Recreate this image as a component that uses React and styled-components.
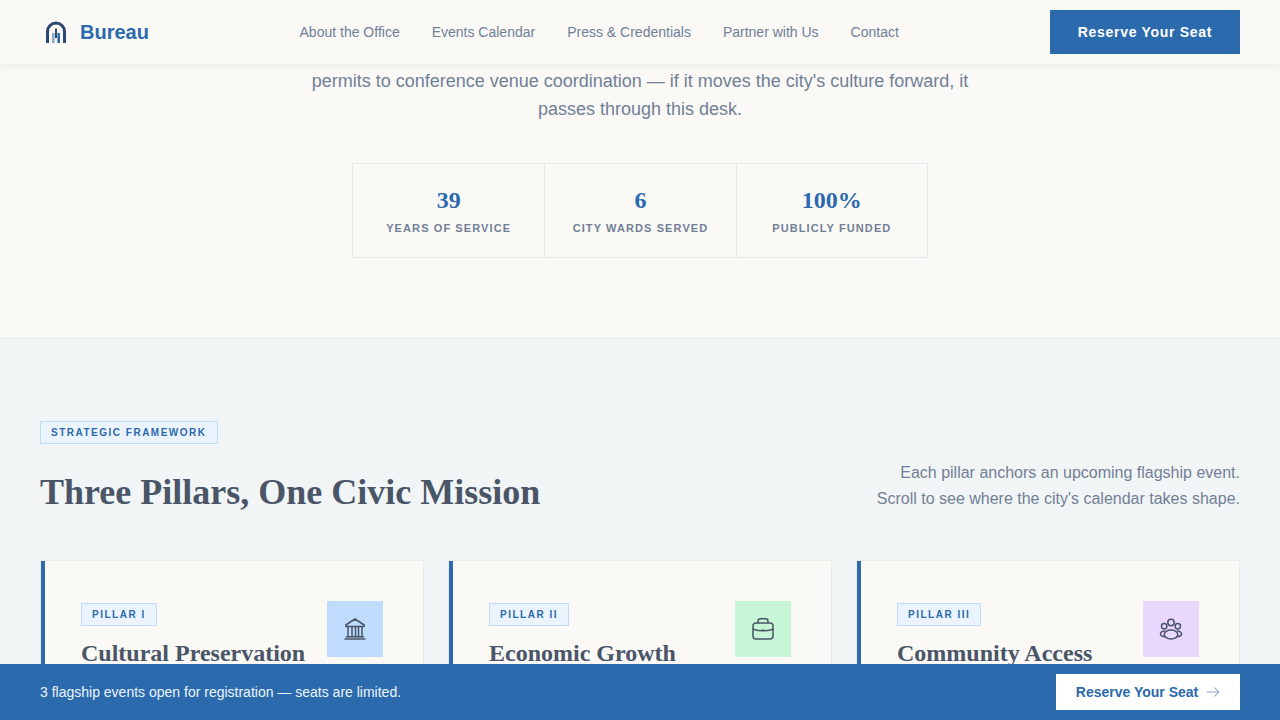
import React from "react";
import styled, { createGlobalStyle } from "styled-components";

const GlobalStyle = createGlobalStyle`
	html, body {
		margin: 0;
		padding: 0;
		height: 100%;
		overflow: hidden;
		font-family: "Liberation Sans", Arial, sans-serif;
		background: #faf9f6;
	}
	* {
		box-sizing: border-box;
	}
`;

const navLinks = [
	"About the Office",
	"Events Calendar",
	"Press & Credentials",
	"Partner with Us",
	"Contact",
];

const stats = [
	{ value: "39", label: "Years of Service" },
	{ value: "6", label: "City Wards Served" },
	{ value: "100%", label: "Publicly Funded" },
];

function BankIcon() {
	return (
		<svg width="24" height="24" viewBox="0 0 24 24" fill="none" stroke="currentColor" strokeWidth="1.5" strokeLinecap="round" strokeLinejoin="round">
			<path d="M12 2 2.800 8v1.600h18.400V8z" />
			<path d="M5 9.600v10.200M9 9.600v10.200M12.500 9.600v10.200M15.500 9.600v10.200M19 9.600v10.200" />
			<path d="M3.500 19.800h17M2 22h20" />
		</svg>
	);
}

function CaseIcon() {
	return (
		<svg width="24" height="24" viewBox="0 0 24 24" fill="none" stroke="currentColor" strokeWidth="1.5" strokeLinecap="round" strokeLinejoin="round">
			<path d="M7 6V4.200a2.400 2.400 0 0 1 2.400-2.400h5.200a2.400 2.400 0 0 1 2.400 2.400V6" />
			<rect x="2" y="6" width="20" height="16" rx="3" />
			<path d="M2 12.200c6.200 2 13.800 2 20 0" />
			<path d="M12 12.800v.6" />
		</svg>
	);
}

function PeopleIcon() {
	return (
		<svg width="24" height="24" viewBox="0 0 24 24" fill="none" stroke="currentColor" strokeWidth="1.5" strokeLinecap="round" strokeLinejoin="round">
			<circle cx="12" cy="5.500" r="3.200" />
			<circle cx="5.200" cy="9.200" r="2.700" />
			<circle cx="18.800" cy="9.200" r="2.700" />
			<ellipse cx="12" cy="17.500" rx="6.800" ry="4.500" />
			<path d="M5.500 14C3 14.400 1.500 15.600 1.500 17s1.200 2.400 3.800 2.700M18.500 14c2.500.4 4 1.600 4 3s-1.200 2.400-3.800 2.700" />
		</svg>
	);
}

const pillars = [
	{ tag: "Pillar I", title: "Cultural Preservation", tint: "#bfdbfe", icon: <BankIcon /> },
	{ tag: "Pillar II", title: "Economic Growth", tint: "#c6f6d5", icon: <CaseIcon /> },
	{ tag: "Pillar III", title: "Community Access", tint: "#e9d8fd", icon: <PeopleIcon /> },
];

function App() {
	return (
		<Page>
			<GlobalStyle />
			<Nav>
				<Brand>
					<svg width="24" height="24" viewBox="0 0 24 24" fill="none">
						<path d="M3.500 23V11.500a8.500 8.500 0 0 1 17 0V23" stroke="#2c4a6e" strokeWidth="3" />
						<path d="M9.300 23V13" stroke="#8fabc6" strokeWidth="2.600" />
						<path d="M14.700 23V13" stroke="#2b6aac" strokeWidth="2.600" />
						<path d="M12 18V8.500" stroke="#2c4a6e" strokeWidth="2" />
					</svg>
					<BrandName>Bureau</BrandName>
				</Brand>
				<NavLinks>
					{navLinks.map((link) => (
						<NavLink key={link} href="#">{link}</NavLink>
					))}
				</NavLinks>
				<NavButton>Reserve Your Seat</NavButton>
			</Nav>

			<Content>
				<Hero>
					<HeroText>
						permits to conference venue coordination — if it moves the city's culture forward, it passes through this desk.
					</HeroText>
					<StatGrid>
						{stats.map((stat) => (
							<Stat key={stat.label}>
								<StatValue>{stat.value}</StatValue>
								<StatLabel>{stat.label}</StatLabel>
							</Stat>
						))}
					</StatGrid>
				</Hero>

				<Framework>
					<Tag>Strategic Framework</Tag>
					<HeadRow>
						<Heading>Three Pillars, One Civic Mission</Heading>
						<HeadNote>
							Each pillar anchors an upcoming flagship event.
							<br />
							Scroll to see where the city's calendar takes shape.
						</HeadNote>
					</HeadRow>
					<Cards>
						{pillars.map((pillar) => (
							<Card key={pillar.tag}>
								<CardTop>
									<div>
										<PillarTag>{pillar.tag}</PillarTag>
										<CardTitle>{pillar.title}</CardTitle>
									</div>
									<IconBox $tint={pillar.tint}>{pillar.icon}</IconBox>
								</CardTop>
							</Card>
						))}
					</Cards>
				</Framework>
			</Content>

			<Bar>
				<BarText>3 flagship events open for registration — seats are limited.</BarText>
				<BarButton>
					Reserve Your Seat
					<svg width="14" height="14" viewBox="0 0 24 24" fill="none" stroke="#8aa9cc" strokeWidth="1.8" strokeLinecap="round" strokeLinejoin="round">
						<path d="M2 12h20M15 5l7 7-7 7" />
					</svg>
				</BarButton>
			</Bar>
		</Page>
	);
}

export default App;

const Page = styled.div`
	height: 720px;
	display: flex;
	flex-direction: column;
	overflow: hidden;
`;

const Nav = styled.header`
	flex: 0 0 64px;
	display: flex;
	align-items: center;
	justify-content: space-between;
	padding: 0 40px;
	background: #faf9f6;
	box-shadow: 0 1px 8px rgba(0, 0, 0, 0.08);
	position: relative;
	z-index: 2;
`;

const Brand = styled.div`
	display: flex;
	align-items: center;
	gap: 12px;
	padding-left: 4px;
`;

const BrandName = styled.span`
	font-size: 20px;
	font-weight: 700;
	color: #2b6aac;
`;

const NavLinks = styled.nav`
	display: flex;
	gap: 32px;
	margin-right: 0.5px;
`;

const NavLink = styled.a`
	font-size: 14px;
	color: #718096;
	text-decoration: none;
`;

const NavButton = styled.button`
	width: 190px;
	height: 44px;
	border: 0;
	background: #2b6aac;
	color: #fff;
	font: 700 14px "Liberation Sans", Arial, sans-serif;
	letter-spacing: 0.7px;
`;

const Content = styled.main`
	flex: 1;
	min-height: 0;
	overflow: hidden;
`;

const Hero = styled.section`
	height: 275px;
	padding-top: 3px;
	display: flex;
	flex-direction: column;
	align-items: center;
	border-bottom: 1px solid #e8ecef;
`;

const HeroText = styled.p`
	margin: 0;
	width: 672px;
	font-size: 18px;
	line-height: 28px;
	color: #718096;
	text-align: center;
`;

const StatGrid = styled.div`
	margin-top: 40px;
	width: 576px;
	display: grid;
	grid-template-columns: repeat(3, 1fr);
	border: 1px solid #e8e8e6;
`;

const Stat = styled.div`
	height: 93px;
	padding-top: 22px;
	text-align: center;
	& + & {
		border-left: 1px solid #e8e8e6;
	}
`;

const StatValue = styled.div`
	font: 700 24px/28px "Liberation Serif", "Times New Roman", serif;
	color: #2b6aac;
`;

const StatLabel = styled.div`
	margin-top: 6px;
	font-size: 11px;
	font-weight: 700;
	line-height: 16px;
	letter-spacing: 1.1px;
	text-transform: uppercase;
	color: #718096;
`;

const Framework = styled.section`
	background: #f2f5f5;
	padding: 82px 40px 0;
`;

const Tag = styled.div`
	display: block;
	width: fit-content;
	height: 23px;
	padding: 0 10px;
	border: 1px solid #bfdbfe;
	background: #ebf4fd;
	font-size: 10px;
	font-weight: 700;
	line-height: 21px;
	letter-spacing: 1.5px;
	text-transform: uppercase;
	color: #2b6aac;
`;

const HeadRow = styled.div`
	margin-top: 16px;
	display: flex;
	align-items: flex-end;
	justify-content: space-between;
`;

const Heading = styled.h2`
	margin: 0;
	font: 700 36px/43px "Liberation Serif", "Times New Roman", serif;
	color: #4a5568;
`;

const HeadNote = styled.p`
	margin: 0;
	padding-bottom: 2px;
	font-size: 16px;
	line-height: 26px;
	text-align: right;
	color: #718096;
`;

const Cards = styled.div`
	margin-top: 46px;
	display: grid;
	grid-template-columns: repeat(3, 1fr);
	gap: 24px;
`;

const Card = styled.article`
	position: relative;
	height: 240px;
	padding: 40px;
	background: #faf9f6;
	border: 1px solid #e8ecef;

	&::before {
		content: "";
		position: absolute;
		left: 0;
		top: 0;
		bottom: 0;
		width: 4px;
		background: #2b6aac;
	}
`;

const CardTop = styled.div`
	display: flex;
	align-items: flex-start;
	justify-content: space-between;
`;

const PillarTag = styled.div`
	width: fit-content;
	height: 23px;
	margin-top: 2px;
	padding: 0 10px;
	border: 1px solid #bfdbfe;
	background: #ebf4fd;
	font-size: 10px;
	font-weight: 700;
	line-height: 21px;
	letter-spacing: 1.5px;
	text-transform: uppercase;
	color: #2b6aac;
`;

const CardTitle = styled.h3`
	margin: 11px 0 0;
	font: 700 24px/32px "Liberation Serif", "Times New Roman", serif;
	color: #4a5568;
`;

const IconBox = styled.div`
	flex: 0 0 56px;
	height: 56px;
	display: flex;
	align-items: center;
	justify-content: center;
	background: ${(p) => p.$tint};
	color: #4a5568;
`;

const Bar = styled.footer`
	flex: 0 0 56px;
	display: flex;
	align-items: center;
	justify-content: space-between;
	padding: 0 40px;
	background: #2b6aac;
	position: relative;
	z-index: 2;
`;

const BarText = styled.span`
	font-size: 14px;
	color: #ebf4fd;
`;

const BarButton = styled.button`
	width: 184px;
	height: 36px;
	display: flex;
	align-items: center;
	justify-content: center;
	gap: 8px;
	border: 0;
	background: #fff;
	color: #2b6aac;
	font: 700 14px "Liberation Sans", Arial, sans-serif;
`;
